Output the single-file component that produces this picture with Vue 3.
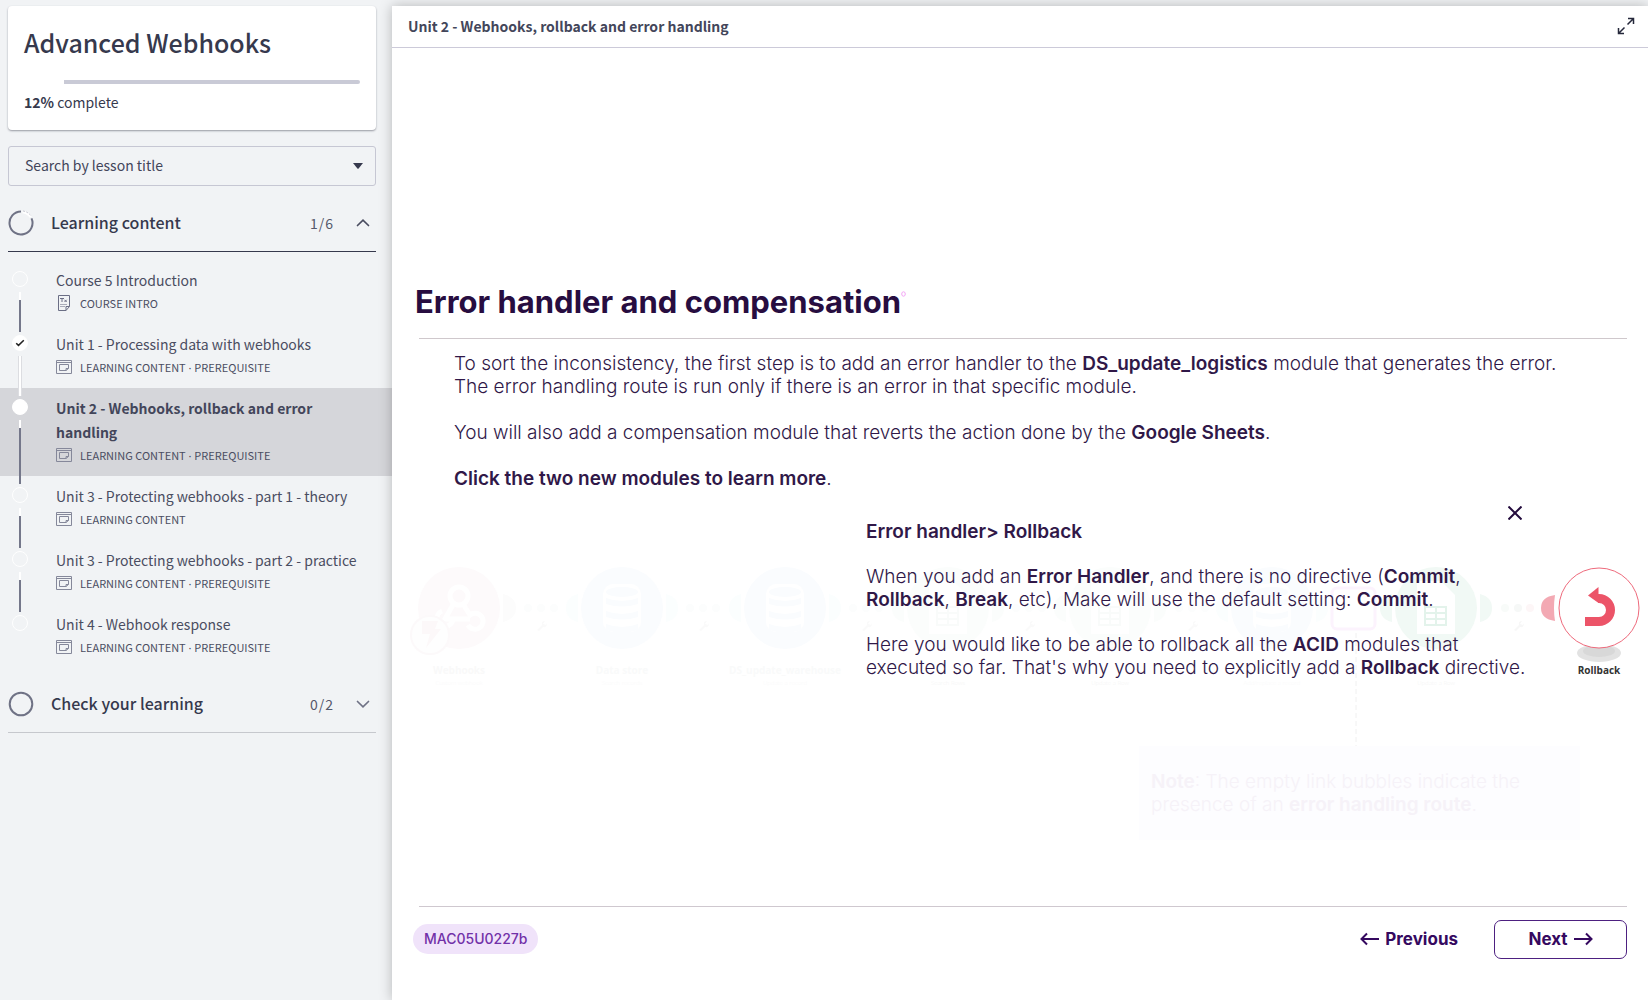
<script setup>
const lessons = [
  { title: 'Course 5 Introduction', meta: ['COURSE INTRO'], icon: 'doc' },
  { title: 'Unit 1 - Processing data with webhooks', meta: ['LEARNING CONTENT', 'PREREQUISITE'], done: true },
  { title: 'Unit 2 - Webhooks, rollback and error handling', meta: ['LEARNING CONTENT', 'PREREQUISITE'], current: true },
  { title: 'Unit 3 - Protecting webhooks - part 1 - theory', meta: ['LEARNING CONTENT'] },
  { title: 'Unit 3 - Protecting webhooks - part 2 - practice', meta: ['LEARNING CONTENT', 'PREREQUISITE'] },
  { title: 'Unit 4 - Webhook response', meta: ['LEARNING CONTENT', 'PREREQUISITE'] },
]

const stores = [
  { x: 230, name: 'Data store', action: 'Search records' },
  { x: 393, name: 'DS_update_warehouse', action: 'Update a record' },
  { x: 880, name: '', action: 'Add/replace a record' },
]
const sheets = [
  { x: 556, action: 'Search Rows', fill: '#fbfdfc', ink: '#f9fbfa' },
  { x: 718, action: 'Update a Row', fill: '#fbfdfc', ink: '#f9fbfa' },
  { x: 1044, action: 'Update a Row', fill: '#f1f9f5', ink: '#e3f3eb' },
]
const links = [149, 311, 474, 637, 800]
</script>

<template>
  <div class="page">
    <aside class="sidebar">
      <section class="course">
        <h1>Advanced Webhooks</h1>
        <div class="progress"><div class="progress-done" :style="{ width: '12%' }"></div></div>
        <p><strong>12%</strong> complete</p>
      </section>

      <div class="search">
        <input type="text" aria-label="Search by lesson title" placeholder="Search by lesson title">
        <svg width="10" height="6" viewBox="0 0 10 6" aria-hidden="true"><path d="M0 0h10L5.6 5.4a.8.8 0 0 1-1.2 0z" fill="#36394d" /></svg>
      </div>

      <button class="section open" aria-expanded="true">
        <svg width="26" height="26" viewBox="0 0 26 26" fill="none">
          <path d="M23.500 8.300A11.500 11.500 0 1 1 13 1.500" stroke="#6f7285" stroke-width="2" />
          <path d="M14.500 1.900A11.300 11.300 0 0 1 22.800 7.200" stroke="#fff" stroke-width="2.500" />
          <path d="M15 1A12.300 12.300 0 0 1 23.300 6.200" stroke="#b9bac4" stroke-width=".8" stroke-dasharray="2 1.500" />
        </svg>
        <span class="name">Learning content</span>
        <span class="count">1/6</span>
        <svg width="14" height="10" viewBox="0 0 14 10" fill="none"><path d="M1.500 7.500 7 2.200l5.500 5.300" stroke="#4a4d60" stroke-width="1.700" stroke-linecap="round" /></svg>
      </button>

      <ul class="lessons">
        <li v-for="(l, i) in lessons" :key="l.title" :class="{ current: l.current, done: l.done }">
          <div class="track">
            <span class="dot">
              <svg v-if="l.done" width="10" height="8" viewBox="0 0 10 8" fill="none"><path d="M1.200 4.200 3.500 6.400 8.800 1.200" stroke="#222" stroke-width="1.500" /></svg>
            </span>
            <span v-if="i < lessons.length - 1" class="line"></span>
          </div>
          <a href="#">
            <span class="title">{{ l.title }}</span>
            <span class="meta">
              <svg v-if="l.icon" width="16" height="16" viewBox="0 0 16 16" fill="none" stroke="#6b6e85">
                <path d="M2.500 .5h11v11l-3.500 4H2.500zM13.500 11.500H10v4" />
                <path d="M4 3.500h4M6 3.500v3.500M8.500 4.800l2.200 2.200M10.700 4.800 8.500 7" />
                <path d="M4 9.500h7M4 11.500h5" stroke="#a9abb8" />
              </svg>
              <svg v-else width="16" height="14" viewBox="0 0 16 14" fill="none" stroke="#85889a">
                <path d="M.5 .5h15v13H.5zM.5 2.500h15" />
                <path d="M12.500 8.500v-4h-9v6h6.500M12.500 8.500h-2.500v2z" />
              </svg>
              <span><template v-for="(m, k) in l.meta" :key="m"><span v-if="k" class="sep"> · </span>{{ m }}</template></span>
            </span>
          </a>
        </li>
      </ul>

      <button class="section" aria-expanded="false">
        <svg width="26" height="26" viewBox="0 0 26 26" fill="none"><circle cx="13" cy="13" r="11.300" stroke="#6f7285" stroke-width="2" /></svg>
        <span class="name">Check your learning</span>
        <span class="count">0/2</span>
        <svg width="14" height="10" viewBox="0 0 14 10" fill="none"><path d="M1.500 2.500 7 7.800l5.500-5.300" stroke="#6f7285" stroke-width="1.700" stroke-linecap="round" /></svg>
      </button>
    </aside>

    <main>
      <header>
        <h2>Unit 2 - Webhooks, rollback and error handling</h2>
        <button aria-label="Full screen">
          <svg width="18" height="18" viewBox="0 0 18 18" fill="none" stroke="#25283b" stroke-width="1.500">
            <path d="M10.500 7.500 16 2M11 1.500h5.500V7M7.500 10.500 2 16M1.500 11v5.500H7" />
          </svg>
        </button>
      </header>

      <article class="slide">
        <h3>Error handler and compensation<svg width="5" height="6" viewBox="0 0 5 6" fill="none" aria-hidden="true"><ellipse cx="2.500" cy="3" rx="1.800" ry="2.200" stroke="#f3a6f5" /></svg></h3>
        <div class="intro">
          <p>To sort the inconsistency, the first step is to add an error handler to the <b>DS_update_logistics</b> module that generates the error.<br>The error handling route is run only if there is an error in that specific module.</p>
          <p>You will also add a compensation module that reverts the action done by the <b>Google Sheets</b>.</p>
          <p><b>Click the two new modules to learn more</b>.</p>
        </div>

        <div class="stage">
          <svg class="diagram" width="1256" height="400" viewBox="0 0 1256 400" font-family="'Open Sans', sans-serif" text-anchor="middle">
            <g>
              <circle cx="67" cy="118" r="41" fill="#fdfafb" />
              <g fill="none" stroke="#fff" stroke-width="5">
                <circle cx="67" cy="106" r="9" />
                <path d="M62 113 53 129h25M71 114l7 11a8 8 0 1 1-2 10M50 121a8 8 0 1 0 11 8" />
              </g>
              <circle cx="38" cy="145" r="19" fill="#fefefe" stroke="#fcf9fa" stroke-width="2" />
              <path d="M30 131h16l-3 8h6l-15 19 4-14h-8z" fill="#fcf8f9" />
              <path d="M111 104q13 3 13 14t-13 14z" fill="#fcfcfc" />
              <text x="67" y="184" font-size="10" font-weight="700" fill="#f9f9f9">Webhooks</text>
              <text x="67" y="195" font-size="6" fill="#fafafa">Custom webhook</text>
            </g>
            <g v-for="x in links" :key="x" fill="#fcfdfd">
              <circle :cx="x - 13" cy="118" r="4" /><circle :cx="x" cy="118" r="4" /><circle :cx="x + 13" cy="118" r="4" />
              <path :d="`M${x - 4} 140l5-5q-1-4 3-4l-2 3 3 1 1-2q0 5-4 4l-4 4z`" fill="#fafafa" />
            </g>
            <g v-for="s in stores" :key="s.x">
              <path :d="`M${s.x - 44} 104q-12 3-12 14t12 14zM${s.x + 44} 104q12 3 12 14t-12 14z`" fill="#fbfefe" />
              <circle :cx="s.x" cy="118" r="41" fill="#fafcfe" />
              <rect :x="s.x - 19" y="94" width="38" height="48" rx="10" fill="#fff" />
              <ellipse :cx="s.x" cy="102" rx="16" ry="5" fill="#fafcfe" />
              <path v-for="y in [108, 121, 134]" :key="y" :d="`M${s.x - 16} ${y}q16 6 32 0v6q-16 5-32 0z`" fill="#fafcfe" />
              <text :x="s.x" y="184" font-size="10" font-weight="700" fill="#f9fafa">{{ s.name }}</text>
              <text :x="s.x" y="195" font-size="6" fill="#fafafa">{{ s.action }}</text>
            </g>
            <g v-for="s in sheets" :key="s.x">
              <path :d="`M${s.x - 44} 104q-12 3-12 14t12 14zM${s.x + 44} 104q12 3 12 14t-12 14z`" :fill="s.fill" />
              <circle :cx="s.x" cy="118" r="41" :fill="s.fill" />
              <path :d="`M${s.x - 19} 91h24l14 14v39h-38z`" fill="#fff" />
              <path :d="`M${s.x - 11} 117h21v18h-21zM${s.x - 11} 123h21M${s.x - 11} 129h21M${s.x} 117v18`" fill="none" :stroke="s.ink" stroke-width="2" />
              <text :x="s.x" y="195" font-size="6" fill="#f5f5f5">{{ s.action }}</text>
            </g>
            <rect x="940" y="98" width="43" height="41" rx="5" fill="#fff" stroke="#fcf3fd" stroke-width="3" />
            <path d="M964 143v116" stroke="#f0f0f0" stroke-dasharray="5 3" />
            <circle cx="1113" cy="118" r="4" fill="#f8fbf9" /><circle cx="1126" cy="118" r="4" fill="#f6f8f7" /><circle cx="1138" cy="118" r="4" fill="#fdf6f7" />
            <path d="M1122 140l5-5q-1-4 3-4l-2 3 3 1 1-2q0 5-4 4l-4 4z" fill="#f7f7f7" />
            <g>
              <ellipse cx="1207" cy="163" rx="22" ry="9" fill="#e2e2e2" />
              <ellipse cx="1207" cy="161" rx="16" ry="6" fill="#d8d8d8" />
              <path d="M1163 105q-14 2-14 13t14 13q-2-13 0-26z" fill="#f3a9b3" />
              <circle cx="1207" cy="118" r="40" fill="#fff" stroke="#ee6a7c" />
              <path d="M1193 131.500h14a11.500 11.500 0 0 0 0-23h-1" fill="none" stroke="#ec5468" stroke-width="9" />
              <path d="M1196 105.500 1206.500 97v16z" fill="#ec5468" />
              <text x="1207" y="184" font-size="10" font-weight="700" fill="#333">Rollback</text>
            </g>
          </svg>

          <div class="popup" role="dialog" aria-label="Rollback">
            <button aria-label="Close"><svg width="14" height="14" viewBox="0 0 14 14"><path d="m.5.5 13 13m0-13-13 13" stroke="#230b3d" stroke-width="2" /></svg></button>
            <p><b>Error handler&gt; Rollback</b></p>
            <p>When you add an <b>Error Handler</b>, and there is no directive (<b>Commit</b>, <br><b>Rollback</b>, <b>Break</b>, etc), Make will use the default setting: <b>Commit</b>.</p>
            <p>Here you would like to be able to rollback all the <b>ACID</b> modules that<br>executed so far. That's why you need to explicitly add a <b>Rollback</b> directive.</p>
          </div>

          <p class="note"><b>Note</b>: The empty link bubbles indicate the<br>presence of an <b>error handling route</b>.</p>
        </div>

        <footer>
          <span class="code">MAC05U0227b</span>
          <button class="prev">
            <svg width="20" height="14" viewBox="0 0 20 14" fill="none" stroke="#35095f" stroke-width="2"><path d="M19 7H1.500M7 1.500 1.500 7 7 12.500" /></svg>
            Previous
          </button>
          <button class="next">
            Next
            <svg width="20" height="14" viewBox="0 0 20 14" fill="none" stroke="#35095f" stroke-width="2"><path d="M1 7h17.500M13 1.500 18.500 7 13 12.500" /></svg>
          </button>
        </footer>
      </article>
    </main>
  </div>
</template>

<style>
body { margin: 0; background: #f1f3f5; }
</style>

<style scoped>
* { box-sizing: border-box; }
h1, h2, h3, p, ul { margin: 0; padding: 0; font-weight: 400; }
button { border: 0; background: none; padding: 0; font: inherit; color: inherit; cursor: pointer; }
svg { flex: none; }

.page {
  display: flex;
  min-height: 100vh;
  padding-top: 6px;
  overflow: hidden;
  background: #f1f3f5;
  color: #36394d;
  font-family: "Noto Sans CJK SC", "Noto Sans", sans-serif;
  font-size: 14px;
}
.sidebar { width: 392px; flex: none; }

.course {
  margin: 0 16px 0 8px;
  padding: 17px 16px 16px;
  background: #fff;
  border-radius: 4px;
  box-shadow: 0 1px 2px rgba(40, 42, 60, .45);
}
.course h1 { font-size: 25px; line-height: 38px; font-weight: 500; }
.progress { height: 4px; margin-top: 19px; border-radius: 2px; background: #c9cad6; }
.progress-done { height: 4px; background: #fff; }
.course p { margin-top: 6px; line-height: 24px; }
.course strong { font-weight: 700; }

.search {
  display: flex;
  align-items: center;
  height: 40px;
  margin: 16px 16px 10px 8px;
  padding-right: 12px;
  border: 1px solid #c6c7d3;
  border-radius: 3px;
}
.search input {
  flex: 1;
  min-width: 0;
  padding: 0 16px 2px;
  border: 0;
  outline: 0;
  background: none;
  font: inherit;
  color: #36394d;
}
.search input::placeholder { color: #42455a; opacity: 1; }

.section {
  display: flex;
  align-items: center;
  width: 368px;
  height: 56px;
  margin-left: 8px;
  padding-right: 6px;
  border-bottom: 1px solid #c6c8cd;
  text-align: left;
}
.section.open { border-color: #36394d; }
.section > svg { margin-bottom: 2px; }
.section .name { flex: 1; margin-left: 17px; padding-bottom: 4px; font-size: 16px; font-weight: 500; }
.section .count { margin-right: 22px; padding-bottom: 2px; color: #55586b; letter-spacing: 1px; }

.lessons { list-style: none; margin: 8px 0 9px; }
.lessons li { display: flex; padding-right: 24px; }
.lessons li.current { background: #d5d6da; }
.track {
  position: relative;
  z-index: 1;
  display: flex;
  flex-direction: column;
  align-items: center;
  width: 40px;
  margin-right: 16px;
  padding-top: 11px;
}
.dot {
  display: flex;
  align-items: center;
  justify-content: center;
  width: 16px;
  height: 16px;
  border: 1px solid #fff;
  border-radius: 50%;
}
.current .dot, .done .dot { background: #fff; }
.line {
  flex: 1;
  width: 2px;
  margin: 5px 0 -8px;
  background: linear-gradient(#fff 8px, #74778a 8px);
}
.done .line { width: 4px; border: solid #dcdde1; border-width: 0 1px; background: #fff; }
.lessons a { flex: 1; padding: 8px 0 10px; color: #4a4d61; text-decoration: none; }
.title { display: block; line-height: 24px; }
.current .title { font-weight: 700; color: #43465a; }
.meta { display: flex; align-items: center; gap: 8px; height: 22px; line-height: 22px; font-size: 11px; }
.sep { font-family: "Noto Sans", sans-serif; line-height: 1; white-space: pre; }

main { flex: 1; min-width: 0; background: #fff; box-shadow: 0 0 12px rgba(0, 0, 0, .25); z-index: 2; }
header {
  display: flex;
  align-items: center;
  justify-content: space-between;
  height: 42px;
  padding: 0 13px 2px 16px;
  border-bottom: 1px solid #cccad9;
}
header h2 { font-size: 14px; font-weight: 700; color: #43465a; }
header button { display: flex; }

.slide {
  padding: 232px 21px 40px 27px;
  color: #301848;
  font-family: "Inter Light", Inter, "Liberation Sans", sans-serif;
  font-size: 19px;
  line-height: 23px;
  font-weight: 300;
}
.slide b, .code, footer button, h3 { font-family: Inter, "Liberation Sans", sans-serif; }
.slide b { font-weight: 600; }
h3 {
  margin-left: -4px;
  padding-bottom: 15px;
  color: #270d40;
  font-size: 31px;
  line-height: 43px;
  font-weight: 700;
}
h3 svg { vertical-align: 16px; }
.intro { padding: 13px 0 0 35px; border-top: 1px solid #cfc8cc; }
.intro p + p { margin-top: 23px; }

.stage { position: relative; padding-bottom: 66px; }
.diagram { position: absolute; top: 0; left: -27px; }
.popup { position: relative; width: 668px; margin-left: 447px; padding-top: 16px; white-space: nowrap; }
.popup p + p { margin-top: 22px; }
.popup button { display: flex; margin: 0 0 0 642px; }
.note {
  position: relative;
  width: 441px;
  margin: 67px 0 0 720px;
  padding: 24px 12px;
  background: #fdfdff;
  color: #f6f2f8;
}

footer {
  display: flex;
  align-items: center;
  height: 53px;
  padding-top: 12px;
  border-top: 1px solid #cfc8cf;
  color: #35095f;
}
.code {
  margin: 0 auto 0 -6px;
  padding: 0 11px;
  border-radius: 15px;
  background: #f0e3fa;
  color: #7231a8;
  font-size: 14px;
  line-height: 30px;
  font-weight: 500;
}
footer .prev, footer .next { display: flex; align-items: center; gap: 5px; font-size: 17px; font-weight: 700; }
.next { justify-content: center; width: 133px; height: 39px; margin-left: 36px; border: 1px solid #4d2080; border-radius: 7px; }
</style>
